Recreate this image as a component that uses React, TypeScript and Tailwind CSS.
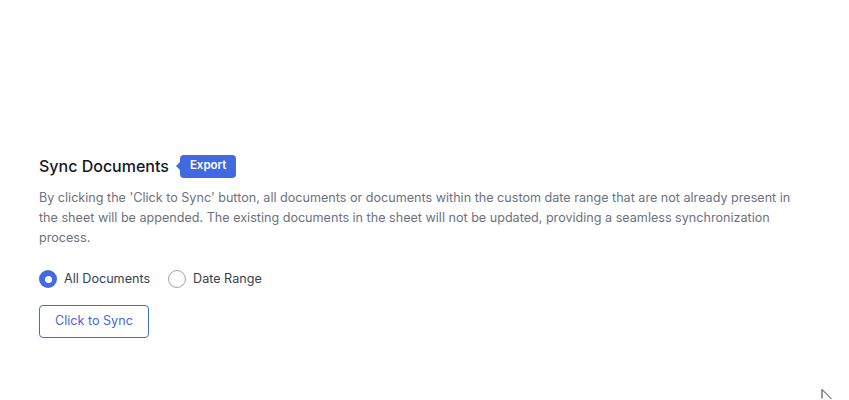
import { useState } from "react"

export default function App() {
  const [mode, setMode] = useState<"all" | "range">("all")

  const options = [
    { id: "all" as const, label: "All Documents" },
    { id: "range" as const, label: "Date Range" },
  ]

  return (
    <div className="relative h-[400px] w-full bg-white font-['Inter','Noto_Sans',sans-serif]">
      <div className="px-[39px] pt-[154px]">
        <div className="flex items-center">
          <h2 className="text-[16px] font-medium leading-6 text-[#111827]">Sync Documents</h2>
          <div className="relative ml-[11px] flex h-[23px] items-center rounded-[4px] bg-[#4169e1] px-[10px]">
            <span className="absolute left-[-4px] top-1/2 h-0 w-0 -translate-y-1/2 border-y-[4px] border-r-[4px] border-y-transparent border-r-[#4169e1]" />
            <span className="text-[11.5px] font-semibold leading-none text-white">Export</span>
          </div>
        </div>

        <p className="mt-[10px] max-w-[770px] text-[12.6px] leading-5 text-[#6b7280]">
          By clicking the 'Click to Sync' button, all documents or documents within the custom date range that are not already present in the sheet will be appended. The existing documents in the sheet will not be updated, providing a seamless synchronization process.
        </p>

        <div className="mt-[21px] flex items-center gap-[18px]">
          {options.map((o) => {
            const on = mode === o.id
            return (
              <label key={o.id} className="flex cursor-pointer items-center gap-[7px]" onClick={() => setMode(o.id)}>
                {on ? (
                  <span className="flex h-[18px] w-[18px] items-center justify-center rounded-full bg-[#4169e1]">
                    <span className="h-[7px] w-[7px] rounded-full bg-white" />
                  </span>
                ) : (
                  <span className="h-[18px] w-[18px] rounded-full border border-[#9ca3af] bg-white" />
                )}
                <span className="text-[12.6px] leading-5 text-[#374151]">{o.label}</span>
              </label>
            )
          })}
        </div>

        <button className="mt-[16px] h-[33px] rounded-[4px] border border-[#4169e1] bg-white px-[15px] text-[12.6px] text-[#4169e1]">
          Click to Sync
        </button>
      </div>

      <svg className="absolute left-[821px] top-[389px]" width="12" height="11" viewBox="0 0 12 11">
        <path d="M1 0.5 V9.5 M1 0.5 L10.5 10" stroke="#333" strokeWidth="1" fill="none" />
      </svg>
    </div>
  )
}
